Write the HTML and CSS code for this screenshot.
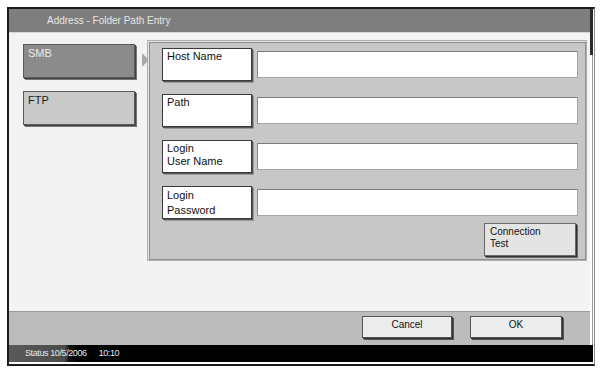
FILE: index.html
```html
<!DOCTYPE html>
<html lang="en">
<head>
  <meta charset="UTF-8" />
  <title>Address - Folder Path Entry</title>
  <link rel="stylesheet" href="styles.css">
</head>
<body>
  <div class="frame">
    <div class="top">
      <div class="main">
        <div class="titlebar">Address - Folder Path Entry</div>

        <div class="content">
          <div class="tabs">
            <button class="tab selected">SMB</button>
            <button class="tab">FTP</button>
          </div>
          <div class="arrow"></div>

          <div class="panel">
            <div class="row">
              <div class="label">Host Name</div>
              <div class="field"></div>
            </div>
            <div class="row">
              <div class="label">Path</div>
              <div class="field"></div>
            </div>
            <div class="row">
              <div class="label two">Login<br>User Name</div>
              <div class="field"></div>
            </div>
            <div class="row">
              <div class="label two pw">Login<br>Password</div>
              <div class="field"></div>
            </div>
            <div class="panel-foot">
              <button class="test">Connection<br>Test</button>
            </div>
          </div>
        </div>

        <div class="actions">
          <button class="btn cancel">Cancel</button>
          <button class="btn ok">OK</button>
        </div>
      </div>
      <div class="scroll"><div class="thumb"></div></div>
    </div>

    <div class="status">
      <span class="status-date">Status 10/5/2006</span>
      <span class="status-time">10:10</span>
    </div>
  </div>
</body>
</html>
```

FILE: styles.css
```css
body {
  margin: 0;
  background: #fff;
  font-family: "Liberation Sans", Arial, sans-serif;
}

button {
  font-family: inherit;
  margin: 0;
  cursor: pointer;
}

.frame {
  margin: 7px 0 0 7px;
  width: 585px;
  border-top: 2px solid #1c1c1c;
  border-left: 2px solid #1c1c1c;
  border-bottom: 2px solid #1c1c1c;
  border-right: 1px solid #8a8a8a;
  padding-bottom: 2px;
  background: #fff;
}

.top {
  display: flex;
}

.main {
  width: 581px;
}

.scroll {
  width: 4px;
  background: linear-gradient(to right, #fff 0, #fff 2px, #9a9a9a 2px, #9a9a9a 3px, #fff 3px);
}

.thumb {
  height: 46px;
  background: #2a2a2a;
  width: 3px;
}

.titlebar {
  height: 24px;
  line-height: 24px;
  background: #7e7e7e;
  color: #e6e6e6;
  font-size: 10px;
  padding-left: 38px;
  border-bottom: 1px solid #d8d8d8;
  box-sizing: border-box;
}

.content {
  height: 278px;
  background: #f3f3f3;
  display: flex;
  align-items: flex-start;
  padding: 7px 3px 0 14px;
  box-sizing: border-box;
}

.tabs {
  display: flex;
  flex-direction: column;
  gap: 13px;
  margin-top: 4px;
}

.tab {
  width: 112px;
  height: 34px;
  box-sizing: border-box;
  border: 1px solid #5a5a5a;
  background: #c9c9c9;
  color: #222;
  font-size: 11px;
  text-align: left;
  padding: 2px 4px;
  display: flex;
  align-items: flex-start;
  box-shadow: 1px 1px 0 #444, 2px 2px 0 #777;
}

.tab.selected {
  background: #8b8b8b;
  color: #ececec;
}

.arrow {
  width: 0;
  height: 0;
  margin: 13px 0 0 7px;
  border-left: 7px solid #a8a8a8;
  border-top: 7px solid transparent;
  border-bottom: 7px solid transparent;
  margin-right: -2px;
}

.panel {
  width: 440px;
  height: 221px;
  box-sizing: border-box;
  background: #c7c7c7;
  border: 1px solid #b0b0b0;
  box-shadow: inset 1px 1px 0 #e4e4e4, inset -1px -1px 0 #8e8e8e, inset 2px 2px 0 #8e8e8e;
  padding: 6px 8px 0 14px;
  display: flex;
  flex-direction: column;
  gap: 12px;
}

.row {
  display: flex;
  align-items: center;
  gap: 5px;
  height: 34px;
}

.label {
  width: 90px;
  height: 33px;
  box-sizing: border-box;
  background: #fff;
  border: 1px solid #3a3a3a;
  box-shadow: 1px 1px 0 #555, 2px 2px 0 #999;
  font-size: 11px;
  color: #111;
  padding: 1px 4px;
  line-height: 13px;
}

.label.pw {
  line-height: 15px;
}

.field {
  flex: 1;
  height: 27px;
  box-sizing: border-box;
  background: #fff;
  border: 1px solid #a5a5a5;
  border-top-color: #7c7c7c;
  border-left-color: #8a8a8a;
}

.panel-foot {
  display: flex;
  justify-content: flex-end;
  margin-top: -8px;
  padding-right: 2px;
}

.test {
  width: 92px;
  height: 33px;
  box-sizing: border-box;
  background: #e4e4e4;
  border: 1px solid #6a6a6a;
  box-shadow: 1px 1px 0 #333, 2px 2px 0 #666;
  font-size: 10px;
  color: #111;
  text-align: left;
  line-height: 12px;
  padding: 2px 5px;
  display: flex;
  align-items: flex-start;
}

.actions {
  height: 34px;
  box-sizing: border-box;
  background: #bcbcbc;
  border-top: 1px solid #9c9c9c;
  display: flex;
  justify-content: flex-end;
  align-items: flex-start;
  gap: 18px;
  padding: 4px 28px 0 0;
}

.btn {
  height: 22px;
  box-sizing: border-box;
  background: #ececec;
  border: 1px solid #555;
  box-shadow: 1px 1px 0 #333, 2px 2px 0 #555;
  font-size: 10px;
  color: #111;
  padding: 2px 0 0;
  display: flex;
  justify-content: center;
  align-items: flex-start;
}

.cancel {
  width: 90px;
}

.ok {
  width: 92px;
}

.status {
  height: 17px;
  line-height: 17px;
  margin-right: 1px;
  background: linear-gradient(to right, #5a5a5a 0, #4a4a4a 56px, #111 60px, #000 70px);
  color: #e8e8e8;
  font-size: 9px;
  letter-spacing: -0.4px;
  padding-left: 16px;
  display: flex;
  gap: 12px;
}
```
